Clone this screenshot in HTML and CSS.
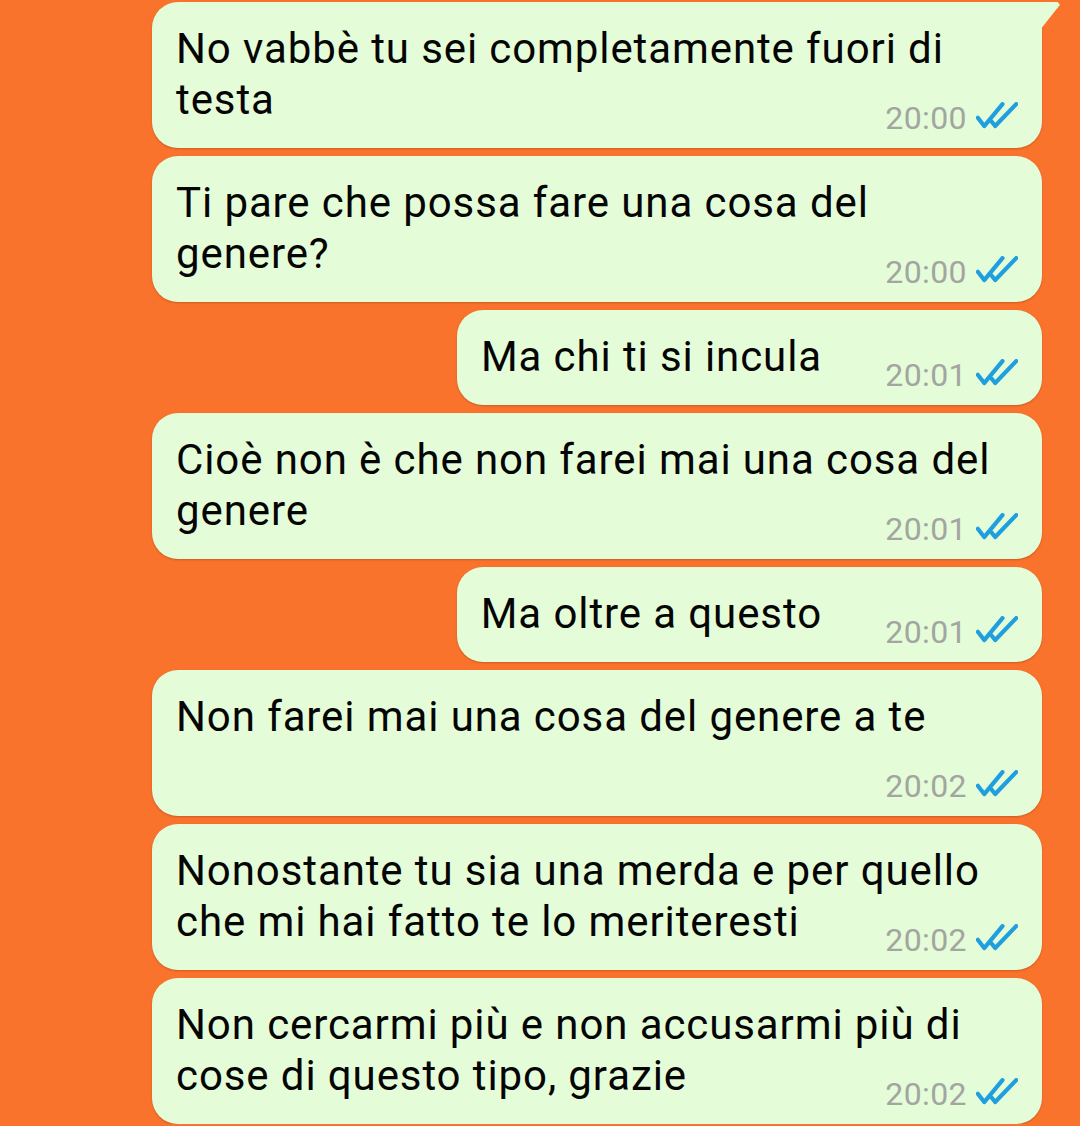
FILE: index.html
```html
<!DOCTYPE html>
<html lang="it">

<head>
  <meta charset="UTF-8">
  <meta name="viewport" content="width=device-width, initial-scale=1.0">
  <title>Chat</title>
  <link rel="stylesheet" href="styles.css">
</head>

<body>
  <div class="chat">
    <div class="msg first">
      <span class="text">No vabbè tu sei completamente fuori di testa</span><span class="spacer"></span>
      <span class="meta"><span class="time">20:00</span><svg class="ticks" viewBox="0 0 46 30"><path d="M2 17 L9 26 L29 2 M17 21 L21 26 L44 2" /></svg></span>
    </div>
    <div class="msg">
      <span class="text">Ti pare che possa fare una cosa del genere?</span><span class="spacer"></span>
      <span class="meta"><span class="time">20:00</span><svg class="ticks" viewBox="0 0 46 30"><path d="M2 17 L9 26 L29 2 M17 21 L21 26 L44 2" /></svg></span>
    </div>
    <div class="msg">
      <span class="text">Ma chi ti si incula</span><span class="spacer"></span>
      <span class="meta"><span class="time">20:01</span><svg class="ticks" viewBox="0 0 46 30"><path d="M2 17 L9 26 L29 2 M17 21 L21 26 L44 2" /></svg></span>
    </div>
    <div class="msg">
      <span class="text">Cioè non è che non farei mai una cosa del genere</span><span class="spacer"></span>
      <span class="meta"><span class="time">20:01</span><svg class="ticks" viewBox="0 0 46 30"><path d="M2 17 L9 26 L29 2 M17 21 L21 26 L44 2" /></svg></span>
    </div>
    <div class="msg">
      <span class="text">Ma oltre a questo</span><span class="spacer"></span>
      <span class="meta"><span class="time">20:01</span><svg class="ticks" viewBox="0 0 46 30"><path d="M2 17 L9 26 L29 2 M17 21 L21 26 L44 2" /></svg></span>
    </div>
    <div class="msg">
      <span class="text">Non farei mai una cosa del genere a te</span><span class="spacer"></span>
      <span class="meta"><span class="time">20:02</span><svg class="ticks" viewBox="0 0 46 30"><path d="M2 17 L9 26 L29 2 M17 21 L21 26 L44 2" /></svg></span>
    </div>
    <div class="msg">
      <span class="text">Nonostante tu sia una merda e per quello che mi hai fatto te lo meriteresti</span><span class="spacer"></span>
      <span class="meta"><span class="time">20:02</span><svg class="ticks" viewBox="0 0 46 30"><path d="M2 17 L9 26 L29 2 M17 21 L21 26 L44 2" /></svg></span>
    </div>
    <div class="msg">
      <span class="text">Non cercarmi più e non accusarmi più di cose di questo tipo, grazie</span><span class="spacer"></span>
      <span class="meta"><span class="time">20:02</span><svg class="ticks" viewBox="0 0 46 30"><path d="M2 17 L9 26 L29 2 M17 21 L21 26 L44 2" /></svg></span>
    </div>
  </div>
</body>

</html>
```

FILE: styles.css
```css
* {
  margin: 0;
  padding: 0;
  box-sizing: border-box;
}

html,
body {
  background-color: #f9732d;
}

body {
  font-family: Roboto, "Noto Sans", sans-serif;
  color: #050505;
}

.chat {
  display: flex;
  flex-direction: column;
  align-items: flex-end;
  gap: 8px;
  padding: 2px 38px 0 0;
}

.msg {
  position: relative;
  max-width: 890px;
  background-color: #e5fcd8;
  border-radius: 26px;
  padding: 21px 24px 23px 24px;
  font-size: 42px;
  letter-spacing: .9px;
  line-height: 51px;
  box-shadow: 0 1px 2px rgba(120, 50, 10, .35);

  & .spacer {
    display: inline-block;
    width: 196px;
  }

  & .meta {
    position: absolute;
    right: 24px;
    bottom: 14px;
    display: flex;
    align-items: flex-end;
    gap: 9px;
    letter-spacing: 0;
  }

  & .time {
    font-size: 32px;
    line-height: 32px;
    letter-spacing: .4px;
    color: #a2a5a0;
  }

  & .ticks {
    width: 42px;
    height: 28px;
    margin-bottom: 4px;
    fill: none;
    stroke: #1f9fde;
    stroke-width: 4.6;
    stroke-linecap: round;
    stroke-linejoin: round;
  }
}

/* primo messaggio con la codina in alto a destra */
.msg.first {
  border-top-right-radius: 0;

  &::after {
    content: "";
    position: absolute;
    top: 0;
    right: -18px;
    width: 20px;
    height: 28px;
    background-color: #e5fcd8;
    clip-path: polygon(0 0, 88% 0, 100% 10%, 0 100%);
  }
}
```
